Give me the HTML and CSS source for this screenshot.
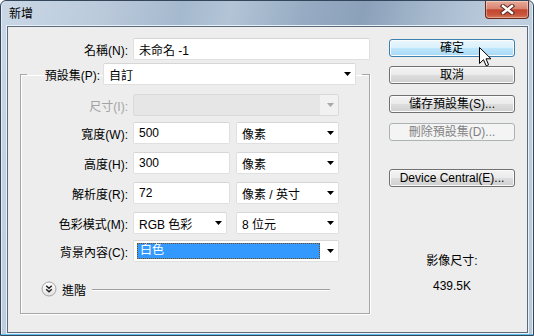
FILE: index.html
```html
<!DOCTYPE html>
<html lang="zh-Hant">
<head>
    <meta charset="UTF-8">
    <title>新增</title>
    <link rel="stylesheet" href="styles.css">
</head>
<body>
    <div class="window">
        <div class="titlebar">
            <span class="title">新增</span>
            <div class="close">
                <svg width="15" height="11" viewBox="0 0 15 11">
                    <path d="M3 2 L12 9 M12 2 L3 9" stroke="#5a2a22" stroke-width="4.4" stroke-linecap="square"/>
                    <path d="M3 2 L12 9 M12 2 L3 9" stroke="#fff" stroke-width="2.4" stroke-linecap="square"/>
                </svg>
            </div>
        </div>
        <div class="client">
            <div class="form">
                <div class="row name-row">
                    <span class="lbl lbl-name">名稱(N):</span>
                    <div class="field w-name">未命名 -1</div>
                </div>
                <fieldset class="group">
                    <legend class="preset">
                        <span class="lbl lbl-preset">預設集(P):</span>
                        <div class="field select w-preset">自訂</div>
                    </legend>
                    <div class="rows">
                        <div class="row">
                            <span class="lbl off">尺寸(I):</span>
                            <div class="field select disabled w-wide"></div>
                        </div>
                        <div class="row gap-s">
                            <span class="lbl">寬度(W):</span>
                            <div class="field w-num">500</div>
                            <div class="field select w-unit">像素</div>
                        </div>
                        <div class="row">
                            <span class="lbl">高度(H):</span>
                            <div class="field w-num">300</div>
                            <div class="field select w-unit">像素</div>
                        </div>
                        <div class="row">
                            <span class="lbl">解析度(R):</span>
                            <div class="field w-num">72</div>
                            <div class="field select w-unit">像素 / 英寸</div>
                        </div>
                        <div class="row">
                            <span class="lbl">色彩模式(M):</span>
                            <div class="field select w-mode">RGB 色彩</div>
                            <div class="field select w-unit">8 位元</div>
                        </div>
                        <div class="row gap-s">
                            <span class="lbl">背景內容(C):</span>
                            <div class="field select focus w-wide"><span class="hl">白色</span></div>
                        </div>
                    </div>
                    <div class="advanced">
                        <svg class="adv-icon" width="16" height="16" viewBox="0 0 16 16">
                            <defs>
                                <linearGradient id="knob" x1="0" y1="0" x2="0" y2="1">
                                    <stop offset="0" stop-color="#ffffff"/>
                                    <stop offset="1" stop-color="#e2e2e2"/>
                                </linearGradient>
                            </defs>
                            <circle cx="8" cy="8" r="7" fill="url(#knob)" stroke="#a3a3a3"/>
                            <path d="M5.2 4.8 L8 7.3 L10.8 4.8 M5.2 8.2 L8 10.7 L10.8 8.2" stroke="#1e1e1e" stroke-width="1.4" fill="none"/>
                        </svg>
                        <span class="adv-text">進階</span>
                        <span class="adv-line"></span>
                    </div>
                </fieldset>
            </div>
            <div class="side">
                <div class="btn hot">確定</div>
                <div class="btn b-cancel">取消</div>
                <div class="btn b-save">儲存預設集(S)...</div>
                <div class="btn disabled b-del">刪除預設集(D)...</div>
                <div class="btn b-device">Device Central(E)...</div>
                <div class="imgsize">
                    <div>影像尺寸:</div>
                    <div class="imgsize-val">439.5K</div>
                </div>
            </div>
        </div>
        <svg class="cursor" width="13" height="20" viewBox="0 0 13 20">
            <path d="M0.5 0.5 L0.5 16.5 L4.5 12.7 L7.2 18.8 L9.6 17.8 L7 11.8 L12 11.8 Z" fill="#fff" stroke="#000" stroke-width="1"/>
        </svg>
    </div>
</body>
</html>
```

FILE: styles.css
```css
body { margin: 0; font-family: "Liberation Sans", "Noto Sans CJK TC", sans-serif; font-size: 12px; color: #000; }

.window { position: relative; width: 534px; height: 336px; box-sizing: border-box; display: flex; flex-direction: column; border: 1px solid #33465a; border-radius: 6px 6px 0 0; overflow: hidden;
    background: linear-gradient(103deg, #c9d7e6 0%, #bccbdc 16%, #a5b9ce 30%, #b3c4d6 38%, #97acc3 50%, #8ba1ba 60%, #a6b9cd 71%, #c1d0e0 84%, #b6c8da 100%);
    box-shadow: inset 0 -1px 0 #5fc0ee, inset 1px 0 0 #e4edf6, inset -1px 0 0 #e4edf6; }

.titlebar { height: 25px; display: flex; justify-content: space-between; align-items: flex-start; padding-left: 8px; }
.title { line-height: 26px; }
.close { width: 42px; height: 17px; margin-right: 4px; display: flex; align-items: center; justify-content: center; border: 1px solid #6b2a1d; border-top: none; border-radius: 0 0 4px 4px;
    background: linear-gradient(#e9ab9a 0%, #d98471 45%, #c3462e 52%, #c8553c 80%, #d77a55 100%); box-shadow: inset 0 0 0 1px rgba(255,255,255,0.35); }

.client { flex: 1; display: flex; margin: 0 5px 2px 6px; border: 1px solid #5b6b7c; background: #ededed; box-shadow: 0 0 0 1px #e8f0f8; }

.form { width: 362px; box-sizing: border-box; padding-left: 12px; }
.row { display: flex; align-items: center; height: 22px; }
.name-row { margin-top: 11px; }
.lbl { flex: none; width: 101px; padding-right: 5px; text-align: right; box-sizing: border-box; width: 106px; white-space: nowrap; }
.lbl-name { width: 113px; }
.lbl.off { color: #a3a3a3; }

.field { height: 22px; box-sizing: border-box; display: flex; align-items: center; padding: 0 5px; background: #fff; border: 1px solid #e0e0e0; border-top-color: #d6d6d6; border-radius: 2px; white-space: nowrap; }
.select { justify-content: space-between; padding-right: 4px; }
.select::after { content: ""; width: 7px; height: 4px; background: #000; clip-path: polygon(0 0, 100% 0, 50% 100%); }
.select.disabled { background: linear-gradient(90deg, #e6e6e6 0, #e6e6e6 186px, #f1f1f1 186px); border-color: #d9d9d9; justify-content: flex-end; }
.select.disabled::after { background: #a8a8a8; }
.select.focus { padding: 2px 4px 2px 3px; }
.hl { width: 183px; height: 16px; box-sizing: border-box; padding-left: 3px; line-height: 15px; background: #3399ff; color: #fff; outline: 1px dotted #7a4a10; outline-offset: -1px; }

.w-name { width: 240px; }
.w-preset { width: 253px; }
.w-wide { width: 206px; }
.w-num { width: 97px; margin-right: 6px; }
.w-unit { width: 103px; }
.w-mode { width: 94px; margin-right: 9px; }

.group { margin: 3px 0 0 0; padding: 9px 0 16px 6px; width: 350px; box-sizing: border-box; border: 1px solid #a6a6a6; box-shadow: 1px 1px 0 #fff, inset 1px 1px 0 #fff; }
.preset { display: flex; align-items: center; padding: 0 6px 0 0; }
.lbl-preset { width: 76px; padding-right: 3px; }

.rows { display: flex; flex-direction: column; gap: 8px; }
.rows .gap-s { margin-top: -2px; }

.advanced { display: flex; align-items: center; height: 16px; margin: 19px 39px 0 14px; }
.adv-icon { flex: none; }
.adv-text { margin-left: 5px; }
.adv-line { flex: 1; height: 1px; margin-left: 6px; background: #a0a0a0; box-shadow: 0 1px 0 #fff; }

.side { width: 126px; margin-left: 19px; padding-top: 12px; display: flex; flex-direction: column; }
.btn { height: 18px; box-sizing: border-box; border: 1px solid #707070; border-radius: 3px; text-align: center; line-height: 16px; white-space: nowrap;
    background: linear-gradient(#f3f3f3 0%, #ebebeb 48%, #dddddd 52%, #cfcfcf 100%); box-shadow: inset 0 0 0 1px #fbfbfb; }
.btn.hot { border-color: #3c7fb1; background: linear-gradient(#eaf6fd 0%, #d9f0fc 48%, #bee6fd 52%, #a7d9f5 100%); }
.btn.disabled { border-color: #adb2b5; background: #f4f4f4; color: #838383; box-shadow: none; }
.b-cancel { margin-top: 9px; }
.b-save { margin-top: 11px; }
.b-del { margin-top: 10px; }
.b-device { margin-top: 28px; }

.imgsize { margin-top: 66px; text-align: center; line-height: 16px; }
.imgsize-val { margin-top: 9px; }

.cursor { position: absolute; left: 478px; top: 46px; }
```
